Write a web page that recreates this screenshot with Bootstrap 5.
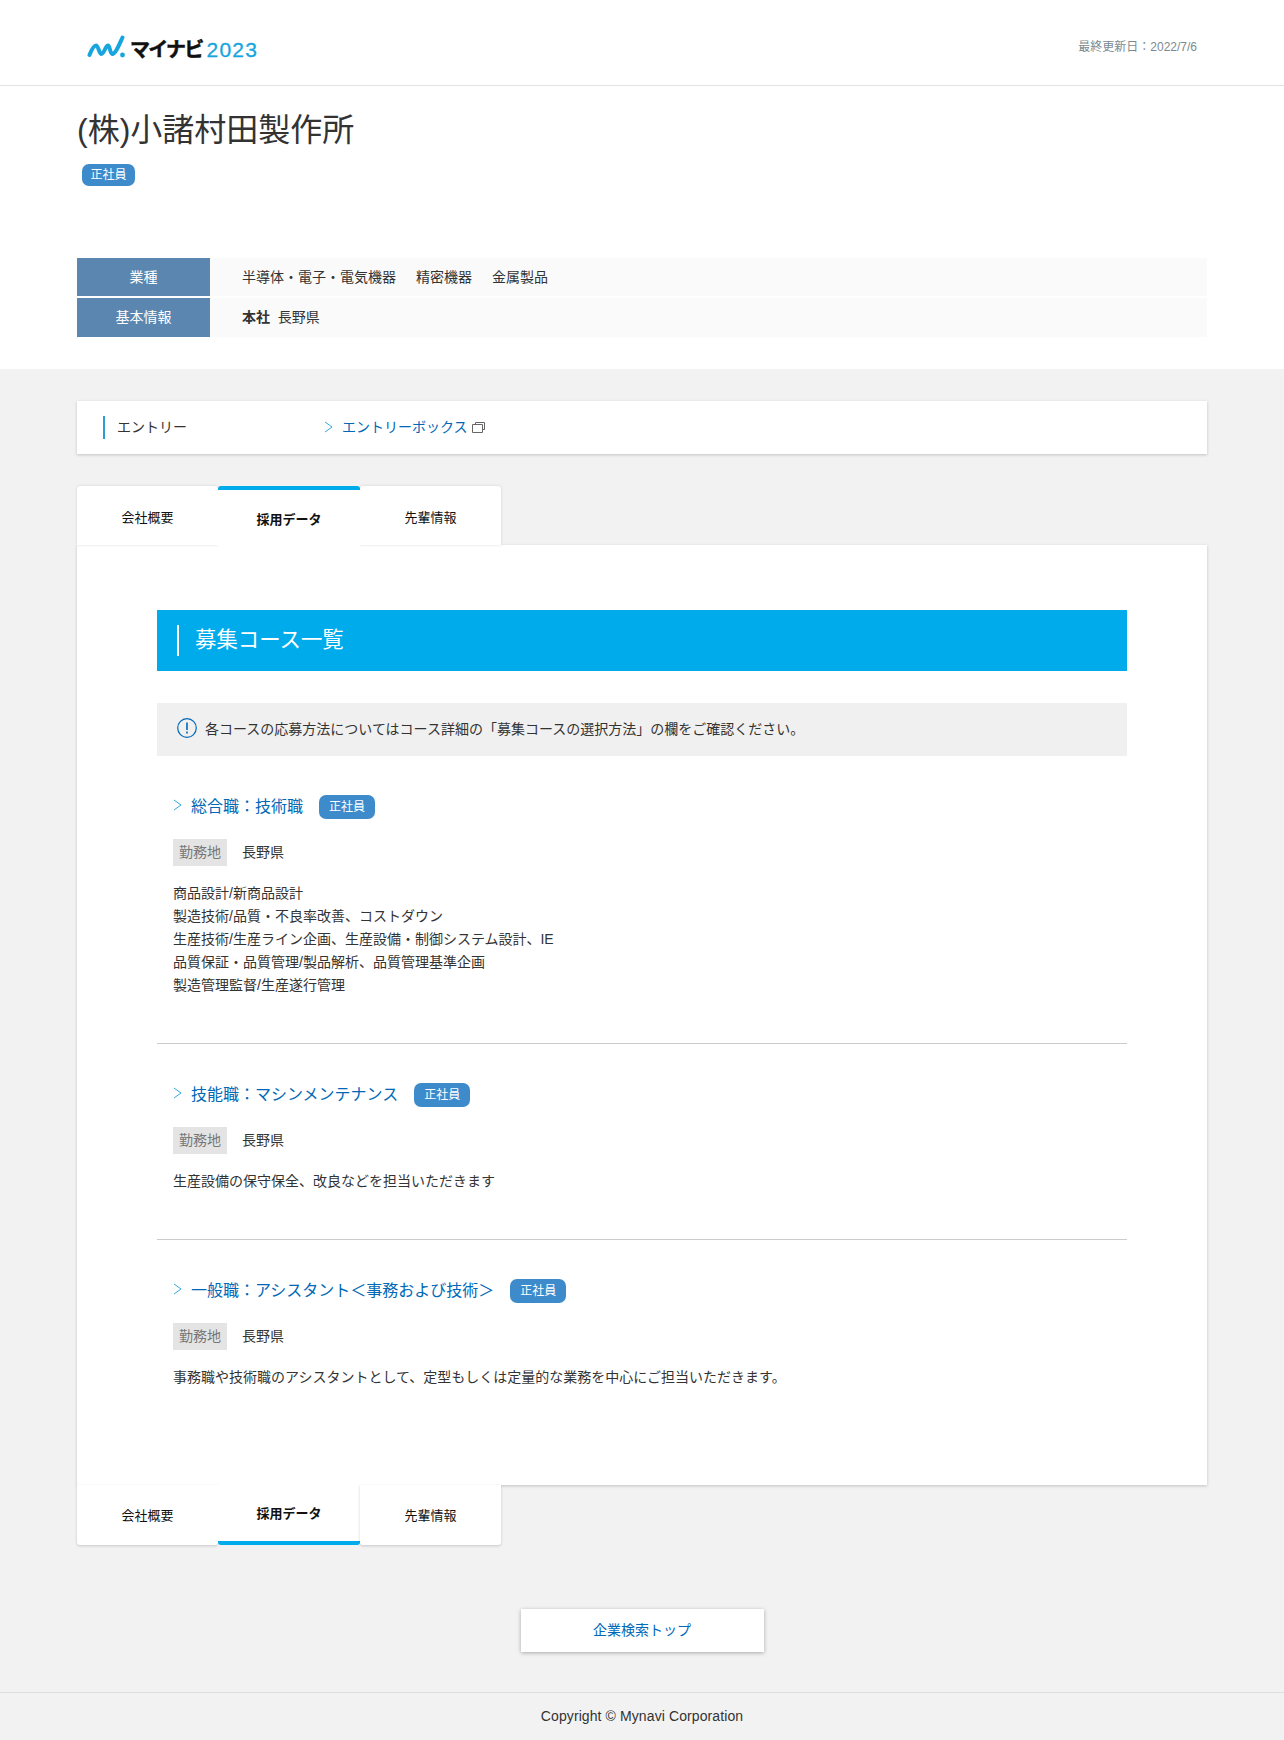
<!DOCTYPE html>
<html lang="ja">
<head>
<meta charset="utf-8">
<title>(株)小諸村田製作所</title>
<link href="https://cdn.jsdelivr.net/npm/bootstrap@5.3.0/dist/css/bootstrap.min.css" rel="stylesheet">
<style>
body{font-family:"Liberation Sans","Noto Sans CJK JP",sans-serif;font-size:14px;color:#333;background:#f2f2f2;line-height:23px}
a{color:#0068b7;text-decoration:none}
.wrap{width:1130px;margin-left:77px}
.site-head{height:86px;background:#fff;border-bottom:1px solid #e3e3e3;position:relative}
.head-in{height:85px;width:1120px;margin-left:77px}
.logo-box{margin-top:14px}
.logo-mark{margin-left:10px;margin-top:-6px}
.logo-kana{font-weight:700;font-size:20px;color:#111;letter-spacing:-1.8px;margin-left:4px;line-height:20px;-webkit-text-stroke:.5px #111}
.logo-year{font-size:21px;color:#17a5de;margin-left:4px;line-height:20px;letter-spacing:1.3px;-webkit-text-stroke:.3px #17a5de}
.updated{font-size:12px;color:#7b8a90;margin-top:9px}
.top-sec{background:#fff;height:283px;padding-top:24px}
.co-name{font-size:32px;line-height:40px;font-weight:400;margin:0;color:#333}
.emp{display:inline-block;background:#3d8bcb;color:#fff;font-size:12px;line-height:22px;height:22px;text-align:center;border-radius:7px}
.emp-top{margin:14px 0 0 5px;display:block;width:53px}
.info-tbl{margin-top:72px}
.info-row{height:38px;margin-bottom:2px}
.info-row:last-child{height:39px;margin-bottom:0}
.info-k{width:133px;background:#5b86af;color:#fff;text-align:center;line-height:38px}
.info-v{flex:1;background:#fafafa;padding-left:32px;line-height:38px}
.info-v span+span{margin-left:20px}
.entry{height:53px;margin-top:32px;background:#fff;box-shadow:0 1px 3px rgba(0,0,0,.2)}
.entry-k{border-left:2px solid #2a9fd6;height:23px;margin-left:26px;padding-left:12px;width:221px;line-height:23px}
.chev{flex:none;margin-right:9px;margin-top:-2px}
.tabs-row{margin-top:32px;height:59px;position:relative;z-index:2}
.tab-i{width:141px;background:#fff;height:59px;color:#111;font-size:13px;text-align:center;line-height:64px;box-shadow:0 0 3px rgba(0,0,0,.14);border-radius:3px 3px 0 0}
.tab-on{width:142px;border-top:4px solid #00abeb;font-weight:700;height:60px;line-height:60px;position:relative;z-index:3;box-shadow:none}
.panel{background:#fff;height:940px;padding:65px 80px 0;box-shadow:0 1px 3px rgba(0,0,0,.2);position:relative}
.sec-h{background:#00abeb;height:61px;color:#fff;font-size:21.4px;padding-left:20px}
.sec-h span{border-left:2px solid #fff;height:31px;line-height:31px;padding-left:16px;display:block}
.note{background:#f0f0f0;height:53px;margin-top:32px;padding-left:20px;gap:8px}
.course{padding:0 16px;border-bottom:1px solid #ccc}
.course:last-child{border-bottom:0}
.course-first{margin-top:38px;padding-bottom:46px}
.course-mid{padding-top:38px;padding-bottom:46px}
.course-last{padding-top:38px}
.c-title{height:24px}
.c-title a{font-size:16px}
.c-title .emp{margin-left:16px;height:24px;line-height:24px;width:56px;margin-top:2px}
.c-loc{margin-top:21px;height:27px}
.loc-k{background:#e4e4e4;color:#777;padding:0 6px;line-height:27px;margin-right:15px;height:27px}
.c-txt{margin-top:16px}
.tabs-btm{height:60px;position:relative;z-index:2}
.tab-b{width:141px;background:#fff;height:60px;color:#111;font-size:13px;text-align:center;line-height:62px;box-shadow:0 1px 3px rgba(0,0,0,.18);border-radius:0 0 3px 3px}
.tab-bon{width:142px;font-weight:700;border-bottom:4px solid #00abeb;line-height:58px;box-shadow:none}
.top-btn{display:block;width:243px;height:43px;line-height:43px;background:#fff;text-align:center;margin:64px auto 0;box-shadow:0 1px 4px rgba(0,0,0,.3)}
.site-foot{margin-top:40px;border-top:1px solid #dedede;height:48px;text-align:center;line-height:46px;font-size:14px;letter-spacing:.1px}
</style>
</head>
<body>
<header class="site-head">
  <div class="head-in d-flex align-items-center justify-content-between">
    <div class="logo-box d-flex align-items-center">
      <svg class="logo-mark" width="39" height="24" viewBox="0 0 39 24"><path d="M2.500 20C4.500 15 6.500 10.500 9 10.500C11.500 10.500 12 19 14.500 19C17 19 18.500 10.500 21 10.500C23 10.500 23 19 25.500 19C28.500 19 32.500 9 35.500 2.500" fill="none" stroke="#17a5de" stroke-width="4" stroke-linecap="round"/><circle cx="35.500" cy="20" r="2.400" fill="#17a5de"/></svg>
      <span class="logo-kana">マイナビ</span><span class="logo-year">2023</span>
    </div>
    <div class="updated">最終更新日：2022/7/6</div>
  </div>
</header>
<section class="top-sec">
  <div class="wrap">
    <h1 class="co-name">(株)小諸村田製作所</h1>
    <span class="emp emp-top">正社員</span>
    <div class="info-tbl">
      <div class="info-row d-flex"><div class="info-k">業種</div><div class="info-v"><span>半導体・電子・電気機器</span><span>精密機器</span><span>金属製品</span></div></div>
      <div class="info-row d-flex"><div class="info-k">基本情報</div><div class="info-v"><b>本社</b>&nbsp;&nbsp;長野県</div></div>
    </div>
  </div>
</section>
<main class="wrap">
  <div class="entry d-flex align-items-center">
    <div class="entry-k">エントリー</div>
    <svg class="chev" width="9" height="12" viewBox="0 0 9 12"><path d="M1 1l7 5-7 5" fill="none" stroke="#35a8de" stroke-width="1"/></svg>
    <a href="#">エントリーボックス</a>
    <svg class="ms-1" width="13" height="11" viewBox="0 0 13 11"><path d="M3.500 2.500V.5h9v7h-2M.5 2.500h10v8H.5z" fill="none" stroke="#666" stroke-width="1"/></svg>
  </div>
  <div class="tabs-row d-flex">
    <div class="tab-i">会社概要</div>
    <div class="tab-i tab-on">採用データ</div>
    <div class="tab-i">先輩情報</div>
  </div>
  <div class="panel">
    <div class="sec-h d-flex align-items-center"><span class="flex-grow-1">募集コース一覧</span></div>
    <div class="note d-flex align-items-center">
      <svg width="20" height="20" viewBox="0 0 20 20" class="mb-1"><circle cx="10" cy="10" r="9.300" fill="none" stroke="#0068b7" stroke-width="1.200"/><path d="M10 4.500v7.500M10 13.500v2" stroke="#0068b7" stroke-width="1.600"/></svg>
      <span>各コースの応募方法についてはコース詳細の「募集コースの選択方法」の欄をご確認ください。</span>
    </div>
    <div class="course course-first">
      <div class="c-title d-flex align-items-center"><svg class="chev" width="9" height="12" viewBox="0 0 9 12"><path d="M1 1l7 5-7 5" fill="none" stroke="#35a8de" stroke-width="1"/></svg><a href="#">総合職：技術職</a><span class="emp">正社員</span></div>
      <div class="c-loc d-flex align-items-center"><span class="loc-k">勤務地</span><span>長野県</span></div>
      <div class="c-txt">商品設計/新商品設計<br>製造技術/品質・不良率改善、コストダウン<br>生産技術/生産ライン企画、生産設備・制御システム設計、IE<br>品質保証・品質管理/製品解析、品質管理基準企画<br>製造管理監督/生産遂行管理</div>
    </div>
    <div class="course course-mid">
      <div class="c-title d-flex align-items-center"><svg class="chev" width="9" height="12" viewBox="0 0 9 12"><path d="M1 1l7 5-7 5" fill="none" stroke="#35a8de" stroke-width="1"/></svg><a href="#">技能職：マシンメンテナンス</a><span class="emp">正社員</span></div>
      <div class="c-loc d-flex align-items-center"><span class="loc-k">勤務地</span><span>長野県</span></div>
      <div class="c-txt">生産設備の保守保全、改良などを担当いただきます</div>
    </div>
    <div class="course course-last">
      <div class="c-title d-flex align-items-center"><svg class="chev" width="9" height="12" viewBox="0 0 9 12"><path d="M1 1l7 5-7 5" fill="none" stroke="#35a8de" stroke-width="1"/></svg><a href="#">一般職：アシスタント＜事務および技術＞</a><span class="emp">正社員</span></div>
      <div class="c-loc d-flex align-items-center"><span class="loc-k">勤務地</span><span>長野県</span></div>
      <div class="c-txt">事務職や技術職のアシスタントとして、定型もしくは定量的な業務を中心にご担当いただきます。</div>
    </div>
  </div>
  <div class="tabs-btm d-flex">
    <div class="tab-b">会社概要</div>
    <div class="tab-b tab-bon">採用データ</div>
    <div class="tab-b">先輩情報</div>
  </div>
  <a class="top-btn" href="#">企業検索トップ</a>
</main>
<footer class="site-foot">Copyright © Mynavi Corporation</footer>
</body>
</html>
